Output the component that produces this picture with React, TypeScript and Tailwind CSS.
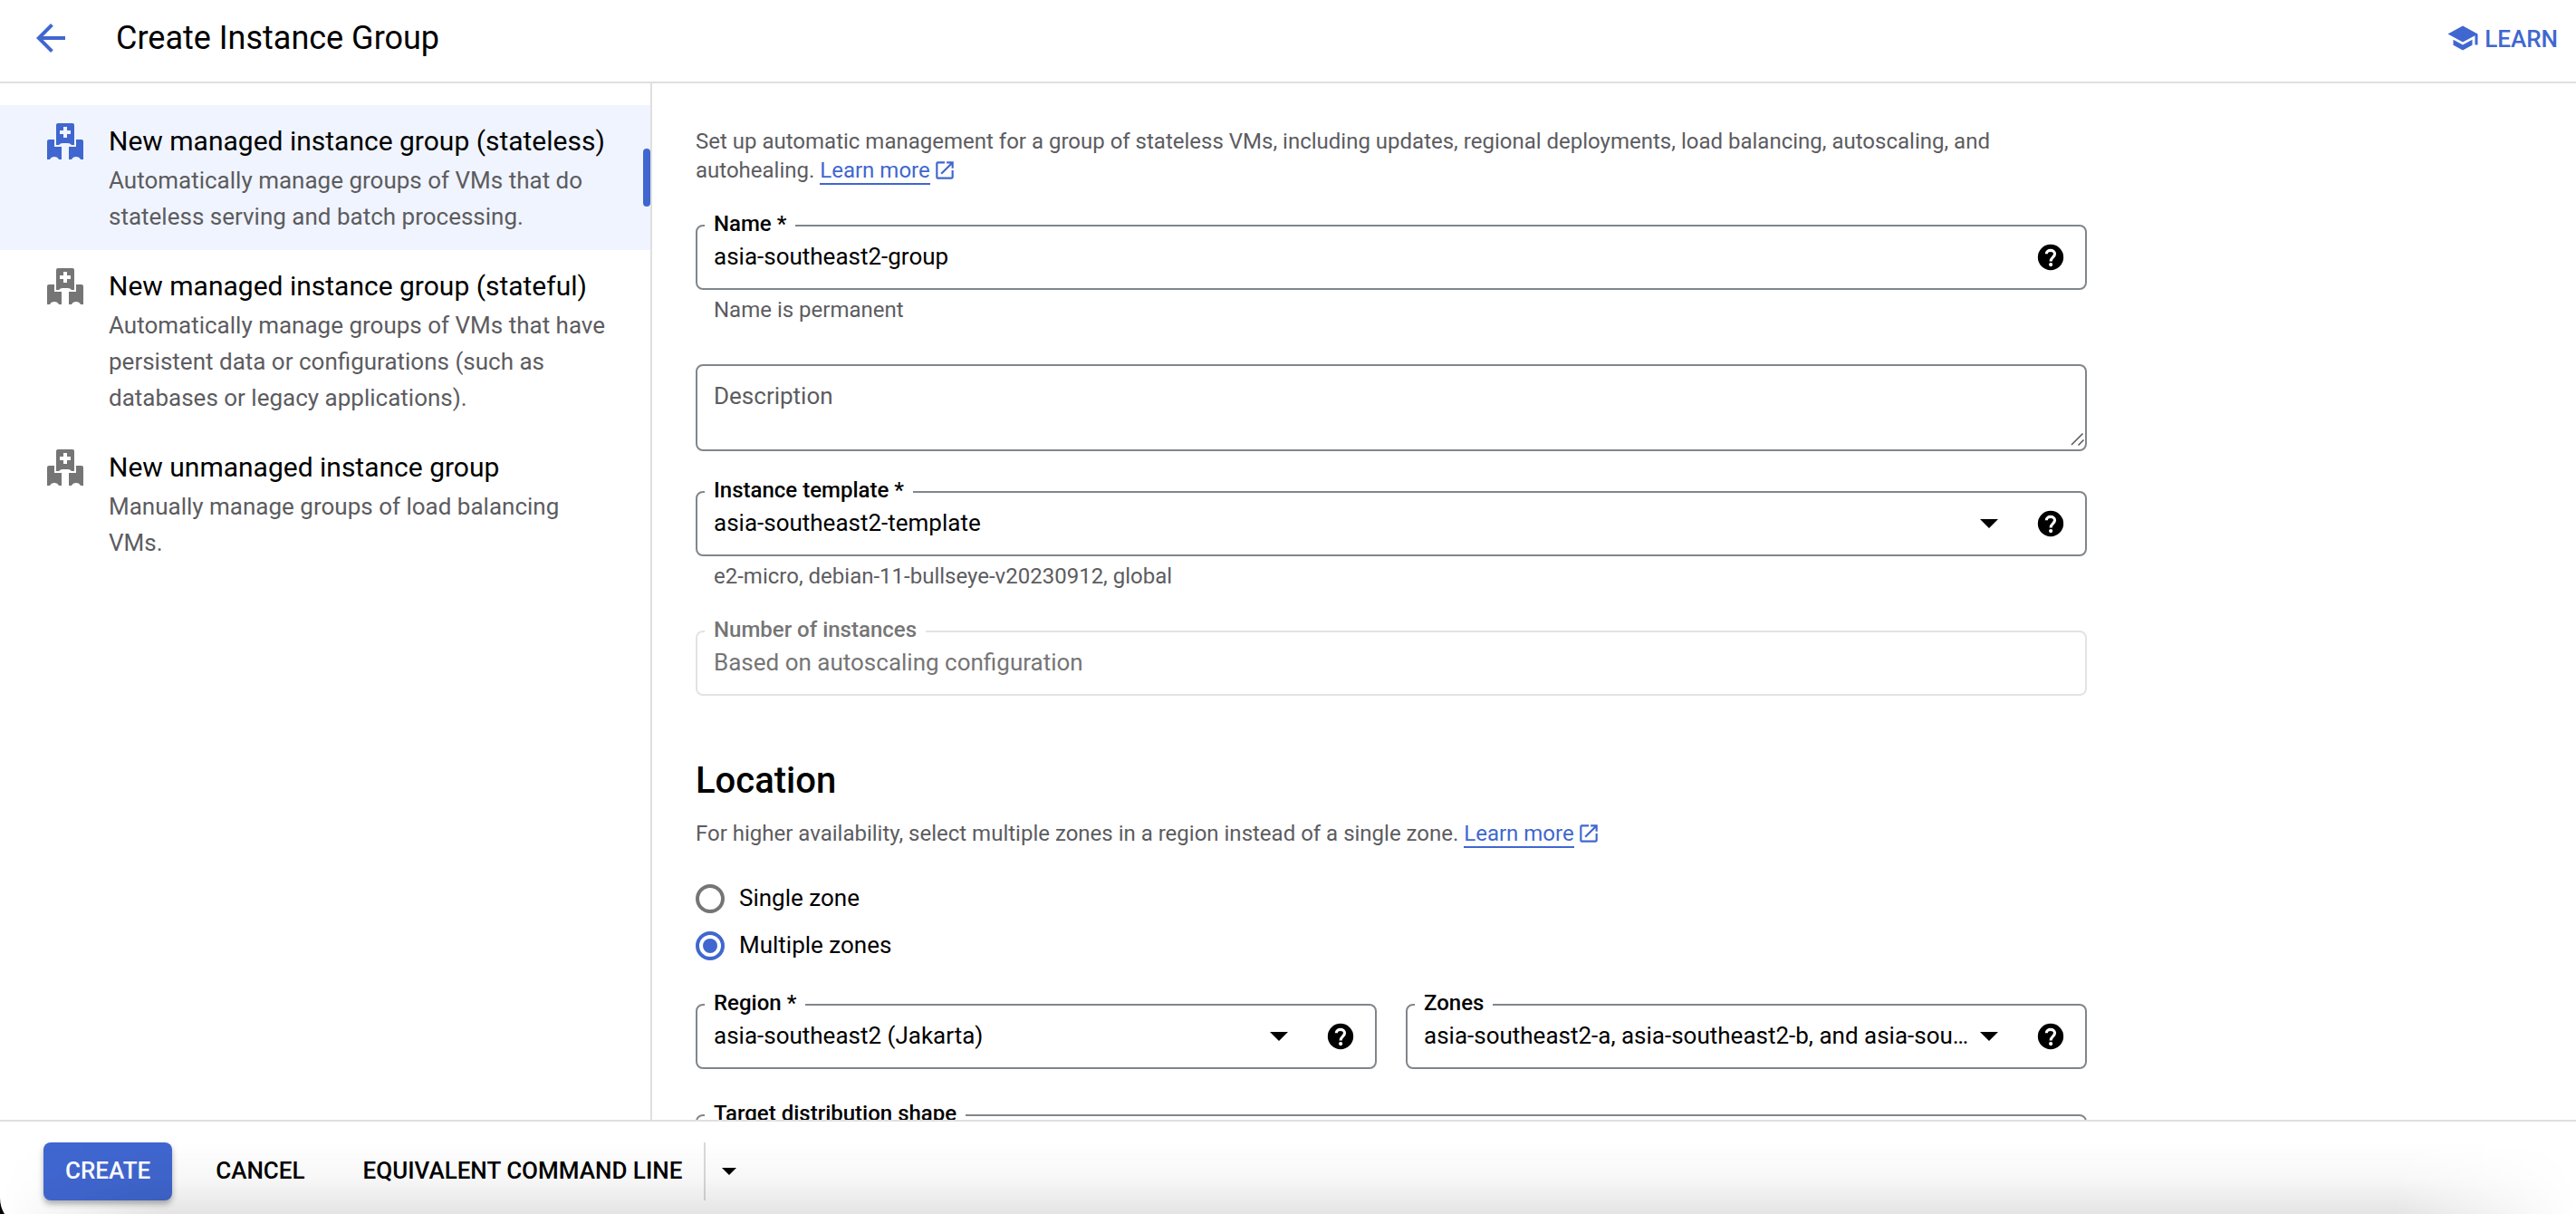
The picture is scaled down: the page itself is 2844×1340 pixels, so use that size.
import { useId, useState, type ReactNode } from "react";

function ArrowBackIcon() {
  return (
    <svg viewBox="0 0 24 24" className="size-12" fill="currentColor" aria-hidden="true">
      <path d="M20 11H7.83l5.59-5.59L12 4l-8 8 8 8 1.41-1.41L7.83 13H20v-2z" />
    </svg>
  );
}

function LearnIcon() {
  return (
    <svg viewBox="0 0 24 24" className="size-9" fill="currentColor" aria-hidden="true">
      <path d="M5 13.18v4L12 21l7-3.82v-4L12 17l-7-3.82zM12 3L1 9l11 6 9-4.91V17h2V9L12 3z" />
    </svg>
  );
}

function HelpIcon() {
  return (
    <svg viewBox="0 0 24 24" className="size-[34px]" aria-hidden="true">
      <circle cx="12" cy="12" r="10" />
      <path
        d="M8.700 9.300C8.700 7.600 10.100 6.600 11.900 6.600s3.300 1.100 3.300 2.800c0 2.400-3.100 2.700-3.100 5.800"
        fill="none"
        stroke="#fff"
        strokeWidth="2.200"
      />
      <circle cx="12.100" cy="17.700" r="1.500" fill="#fff" />
    </svg>
  );
}

function OpenInNewIcon() {
  return (
    <svg viewBox="0 0 24 24" className="ml-[3px] inline size-[26px] align-[-5px]" fill="currentColor" aria-hidden="true">
      <path d="M19 19H5V5h7V3H5a2 2 0 0 0-2 2v14a2 2 0 0 0 2 2h14c1.1 0 2-.9 2-2v-7h-2v7zM14 3v2h3.59l-9.83 9.83 1.41 1.41L19 6.41V10h2V3h-7z" />
    </svg>
  );
}

function GroupIcon() {
  return (
    <svg viewBox="0 0 40 40" className="size-10 shrink-0" fill="currentColor" aria-hidden="true">
      <path
        fillRule="evenodd"
        d="M12 0h16a2 2 0 0 1 2 2v22h-3q-1.500-2-4-2h-6q-2.500 0-4 2h-3V2a2 2 0 0 1 2-2zM18 4v4h-4v4h4v4h4v-4h4V8h-4V4z"
      />
      <path d="M2 18h6v8h8v14h-3q-1.500-3-5-3t-5 3H0V20a2 2 0 0 1 2-2z" />
      <path d="M38 18h-6v8h-8v14h3q1.500-3 5-3t5 3h3V20a2 2 0 0 0-2-2z" />
    </svg>
  );
}

function LearnMore() {
  return (
    <a href="#learn-more" className="whitespace-nowrap text-[#4067d0]">
      <span className="border-b-2 border-[#4067d0]">Learn more</span>
      <OpenInNewIcon />
    </a>
  );
}

function HelpButton({ topic }: { topic: string }) {
  return (
    <button type="button" aria-label={`Help for ${topic}`} className="mr-[21px] shrink-0">
      <HelpIcon />
    </button>
  );
}

function Field({
  id,
  label,
  hint,
  disabled = false,
  children,
}: {
  id: string;
  label: string;
  hint?: string;
  disabled?: boolean;
  children: ReactNode;
}) {
  return (
    <div>
      <div
        className={`relative flex h-[72px] items-center rounded-lg border-2 ${
          disabled ? "border-[#e3e3e3] text-[#757575]" : "border-[#80868b]"
        }`}
      >
        <label
          htmlFor={id}
          className="absolute -top-[15px] left-2 bg-white px-[10px] text-2xl leading-6 font-medium whitespace-nowrap"
        >
          {label}
        </label>
        {children}
      </div>
      {hint && <p className="mt-2 pl-5 text-2xl leading-7 text-[#5c5c5f]">{hint}</p>}
    </div>
  );
}

function SelectField({ label, value, hint }: { label: string; value: string; hint?: string }) {
  const id = useId();
  return (
    <Field id={id} label={label} hint={hint}>
      <div className="relative h-full min-w-0 flex-1">
        <select
          id={id}
          className="h-full w-full appearance-none truncate bg-transparent pr-[70px] pb-[2px] pl-[18px] text-[26px] outline-none"
        >
          <option>{value}</option>
        </select>
        <svg
          viewBox="0 0 20 10"
          className="pointer-events-none absolute top-[29px] right-[41px] h-[10px] w-5"
          aria-hidden="true"
        >
          <path d="M0 0h20L10 10z" />
        </svg>
      </div>
      <HelpButton topic={label} />
    </Field>
  );
}

const groupTypes = [
  {
    title: "New managed instance group (stateless)",
    text: "Automatically manage groups of VMs that do stateless serving and batch processing.",
  },
  {
    title: "New managed instance group (stateful)",
    text: "Automatically manage groups of VMs that have persistent data or configurations (such as databases or legacy applications).",
  },
  {
    title: "New unmanaged instance group",
    text: "Manually manage groups of load balancing VMs.",
  },
];

function Sidebar() {
  const [active, setActive] = useState(0);
  return (
    <nav className="w-[720px] shrink-0 border-r-2 border-[#dfdfdf] pt-6">
      {groupTypes.map((type, i) => (
        <button
          key={type.title}
          type="button"
          onClick={() => setActive(i)}
          className={`relative flex w-full items-start gap-7 pt-5 pr-11 pb-[17px] pl-[52px] text-left ${
            i === active ? "bg-[#f0f4fe] text-[#4067d0]" : "text-[#757575]"
          }`}
        >
          <GroupIcon />
          <span>
            <span className="mb-[3px] block text-3xl leading-10 text-black">{type.title}</span>
            <span className="block text-[26px] leading-10 text-[#5c5c5f]">{type.text}</span>
          </span>
          {i === active && (
            <span className="absolute top-12 right-0 h-16 w-2 rounded-[4px] bg-[#4067d0]" />
          )}
        </button>
      ))}
    </nav>
  );
}

function ZoneOption({ label, checked, onSelect }: { label: string; checked: boolean; onSelect: () => void }) {
  return (
    <label className="flex h-8 items-center gap-4 text-[26px] leading-8">
      <input
        type="radio"
        name="zones"
        checked={checked}
        onChange={onSelect}
        className="grid size-8 appearance-none place-items-center rounded-full border-4 border-[#757575] before:size-4 before:rounded-full checked:border-[#4067d0] checked:before:bg-[#4067d0]"
      />
      <span className="pb-[2px]">{label}</span>
    </label>
  );
}

function GroupForm() {
  const [multiple, setMultiple] = useState(true);
  return (
    <main className="min-w-0 flex-1 overflow-y-auto px-12 pt-12 [scrollbar-width:none]">
      <form className="max-w-[1536px]">
        <p className="mb-11 text-2xl leading-8 text-[#5c5c5f]">
          Set up automatic management for a group of stateless VMs, including updates, regional deployments, load
          balancing, autoscaling, and autohealing. <LearnMore />
        </p>

        <Field id="name" label="Name *" hint="Name is permanent">
          <input
            id="name"
            type="text"
            defaultValue="asia-southeast2-group"
            className="h-full min-w-0 flex-1 pb-[2px] pl-[18px] text-[26px] outline-none"
          />
          <HelpButton topic="Name" />
        </Field>

        <div className="relative mt-[46px] mb-11 flex h-24 rounded-lg border-2 border-[#80868b]">
          <textarea
            aria-label="Description"
            placeholder="Description"
            className="w-full resize-none px-[18px] pt-[17px] text-[26px] leading-8 outline-none placeholder:text-[#5c5c5f]"
          />
          <svg
            viewBox="0 0 16 16"
            className="absolute right-0 bottom-[3px] size-4"
            stroke="#555"
            strokeWidth="1.500"
            aria-hidden="true"
          >
            <path d="M1 14L13.500 1.500M8.500 14.500L14.500 8.500" />
          </svg>
        </div>

        <SelectField
          label="Instance template *"
          value="asia-southeast2-template"
          hint="e2-micro, debian-11-bullseye-v20230912, global"
        />

        <div className="mt-[46px]">
          <Field id="count" label="Number of instances" disabled>
            <input
              id="count"
              type="text"
              disabled
              defaultValue="Based on autoscaling configuration"
              className="h-full min-w-0 flex-1 pb-[2px] pl-[18px] text-[26px]"
            />
          </Field>
        </div>

        <h2 className="mt-[70px] mb-[18px] text-[40px] leading-[48px] font-medium">Location</h2>
        <p className="text-2xl leading-8 text-[#5c5c5f]">
          For higher availability, select multiple zones in a region instead of a single zone. <LearnMore />
        </p>

        <div className="mt-10 mb-12 flex flex-col gap-5">
          <ZoneOption label="Single zone" checked={!multiple} onSelect={() => setMultiple(false)} />
          <ZoneOption label="Multiple zones" checked={multiple} onSelect={() => setMultiple(true)} />
        </div>

        <div className="mb-[50px] grid grid-cols-2 gap-8">
          <SelectField label="Region *" value="asia-southeast2 (Jakarta)" />
          <SelectField label="Zones" value="asia-southeast2-a, asia-southeast2-b, and asia-southeast2-c" />
        </div>

        <SelectField label="Target distribution shape" value="Even" />
      </form>
    </main>
  );
}

function Footer() {
  return (
    <footer className="relative flex items-center gap-4 border-t-2 border-[#dfdfdf] pt-[23px] pb-[15px] pl-12 text-[26px] font-medium">
      <button
        type="button"
        className="mr-2 h-16 rounded-lg bg-[#4067d0] px-6 pb-[2px] text-white shadow-[0_4px_6px_rgba(0,0,0,0.3)]"
      >
        CREATE
      </button>
      <button type="button" className="h-16 px-6 pb-[2px]">
        CANCEL
      </button>
      <div className="flex h-16">
        <button type="button" className="px-6 pb-[2px]">
          EQUIVALENT COMMAND LINE
        </button>
        <button type="button" aria-label="More command options" className="border-l-2 border-[#dadada] px-[18px]">
          <svg viewBox="0 0 16 8" className="h-2 w-4" aria-hidden="true">
            <path d="M0 0h16L8 8z" />
          </svg>
        </button>
      </div>
      <div className="pointer-events-none absolute inset-x-0 bottom-0 h-20 bg-linear-to-b from-black/0 via-black/[0.03] to-black/[0.105] [mask-image:linear-gradient(to_right,transparent,black_180px,black_calc(100%-200px),transparent)]" />
      <svg
        viewBox="0 0 6 18"
        className="pointer-events-none absolute bottom-0 left-0 h-[18px] w-[6px]"
        aria-hidden="true"
      >
        <path d="M0 0Q0 10 5 18H0z" />
      </svg>
    </footer>
  );
}

export default function App() {
  return (
    <div className="flex h-screen flex-col overflow-hidden bg-white font-[Roboto,sans-serif] text-black">
      <header className="flex items-center border-b-2 border-[#dfdfdf] pt-[18px] pr-5 pb-6 pl-8">
        <button type="button" aria-label="Back" className="mr-12 text-[#4067d0]">
          <ArrowBackIcon />
        </button>
        <h1 className="text-4xl leading-[48px]">Create Instance Group</h1>
        <button type="button" className="ml-auto flex items-center gap-[6px] text-[26px] font-medium text-[#4067d0]">
          <LearnIcon />
          <span className="pt-[2px]">LEARN</span>
        </button>
      </header>
      <div className="flex min-h-0 flex-1">
        <Sidebar />
        <GroupForm />
      </div>
      <Footer />
    </div>
  );
}
